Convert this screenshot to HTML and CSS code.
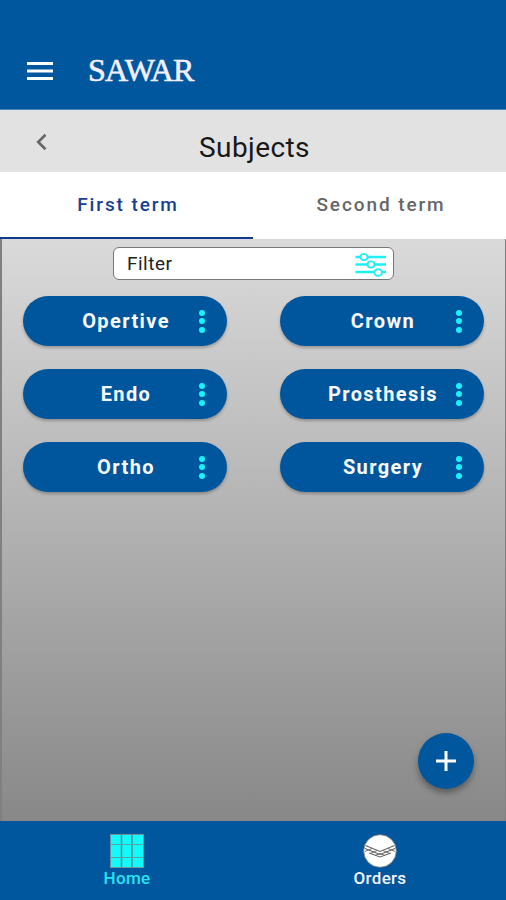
FILE: index.html
```html
<!DOCTYPE html>
<html lang="en">
<head>
    <meta charset="UTF-8">
    <meta name="viewport" content="width=device-width, initial-scale=1.0">
    <title>Subjects</title>
    <link rel="stylesheet" href="styles.css">
</head>
<body>
    <div class="app">
        <header class="topbar">
            <svg class="menu-icon" width="26" height="18" viewBox="0 0 26 18">
                <path d="M0 1.5h26M0 9h26M0 16.5h26" stroke="#fff" stroke-width="2.8"/>
            </svg>
            <span class="logo">SAWAR</span>
        </header>

        <div class="title-bar">
            <svg class="back-icon" width="12" height="18" viewBox="0 0 12 18">
                <path d="M10.500 1.800L3.200 9l7.300 7.200" fill="none" stroke="#666" stroke-width="2.600"/>
            </svg>
            <h1>Subjects</h1>
        </div>

        <div class="tabs">
            <div class="tab active"><span>First term</span></div>
            <div class="tab"><span>Second term</span></div>
        </div>

        <main class="content">
            <div class="filter">
                <span>Filter</span>
                <svg width="32" height="26" viewBox="0 0 32 26">
                    <g fill="none" stroke="#20eef5" stroke-width="2.600">
                        <path d="M0.500 6h5M12.500 6h18.500M0.500 13.500h12M19.500 13.500h11.500M0.500 21h18.500M27 21h4"/>
                        <ellipse cx="9" cy="6" rx="3.600" ry="3.100" stroke-width="1.900"/>
                        <ellipse cx="16" cy="13.500" rx="3.600" ry="3.100" stroke-width="1.900"/>
                        <ellipse cx="23.200" cy="21.500" rx="3.800" ry="3.300" stroke-width="1.900"/>
                    </g>
                </svg>
            </div>

            <div class="subjects">
                <div class="subject"><span>Opertive</span><div class="dots"><i></i><i></i><i></i></div></div>
                <div class="subject"><span>Crown</span><div class="dots"><i></i><i></i><i></i></div></div>
                <div class="subject"><span>Endo</span><div class="dots"><i></i><i></i><i></i></div></div>
                <div class="subject"><span>Prosthesis</span><div class="dots"><i></i><i></i><i></i></div></div>
                <div class="subject"><span>Ortho</span><div class="dots"><i></i><i></i><i></i></div></div>
                <div class="subject"><span>Surgery</span><div class="dots"><i></i><i></i><i></i></div></div>
            </div>

            <div class="add-btn">
                <svg width="22" height="22" viewBox="0 0 22 22">
                    <path d="M11 1v20M1 11h20" stroke="#fff" stroke-width="3"/>
                </svg>
            </div>
        </main>

        <nav class="bottom-nav">
            <div class="nav-item home">
                <svg width="34" height="34" viewBox="0 0 34 34">
                    <rect x="0.500" y="0.500" width="33" height="33" fill="#12fafa" stroke="#6f959c"/>
                    <path d="M11.500 0v34M22 0v34" stroke="#4e959c" stroke-width="1.600"/>
                    <path d="M0 10.500h34M0 23.500h34" stroke="#4ea5aa" stroke-width="1.200"/>
                </svg>
                <span>Home</span>
            </div>
            <div class="nav-item">
                <svg width="34" height="34" viewBox="0 0 34 34">
                    <circle cx="17" cy="17" r="16.300" fill="#fff" stroke="#777" stroke-width="0.800"/>
                    <g fill="none" stroke="#666" stroke-width="1.100">
                        <path d="M2.500 11.500l14.500 6 14.500-6M2 14.500l15 6 15-6M6 19l11 4 11-4"/>
                        <path d="M2 17.500l7-3M7 19.500l7-3M12 21.500l5-2M32 17.500l-7-3M27 19.500l-7-3M22 21.500l-5-2" stroke-width="0.900"/>
                    </g>
                </svg>
                <span>Orders</span>
            </div>
        </nav>
    </div>
</body>
</html>
```
FILE: styles.css
```css
* {
    box-sizing: border-box;
}

body {
    margin: 0;
    font-family: Roboto, "Liberation Sans", sans-serif;
}

.app {
    display: flex;
    flex-direction: column;
    width: 100%;
    height: 900px;
    overflow: hidden;
}

/* header */
.topbar {
    display: flex;
    align-items: center;
    gap: 35px;
    height: 110px;
    padding: 32px 27px 0;
    background: #00579d;
    border-bottom: 1px solid #4a86b8;
}

.logo {
    padding-bottom: 2px;
    font-family: "Liberation Serif", serif;
    font-size: 32px;
    line-height: 36px;
    letter-spacing: -0.8px;
    color: #f4efff;
    -webkit-text-stroke: 0.6px #f4efff;
}

.title-bar {
    display: grid;
    grid-template-columns: 1fr auto 1fr;
    height: 62px;
    padding: 0 0 0 35px;
    background: #e2e2e2;
}

.back-icon {
    margin-top: 23px;
}

.title-bar h1 {
    margin: 21px 0 0 -32px;
    font-size: 28px;
    font-weight: 400;
    line-height: 34px;
    letter-spacing: 0.4px;
    color: #181818;
}

/* tabs */
.tabs {
    display: flex;
    height: 67px;
    background: #fff;
}

.tab {
    flex: 1;
    padding: 20px 0 0 3px;
    text-align: center;
    font-size: 19px;
    font-weight: 500;
    line-height: 26px;
    letter-spacing: 1.9px;
    color: #666;
}

.tab.active {
    color: #173f91;
    border-bottom: 2px solid #103b91;
}

/* content */
.content {
    position: relative;
    flex: 1;
    padding: 8px 21px 0;
    border: solid #808080;
    border-width: 0 1px 0 2px;
    background: linear-gradient(#dadada, #888);
}

.filter {
    display: flex;
    align-items: center;
    justify-content: space-between;
    width: 281px;
    height: 33px;
    margin: 0 auto;
    padding: 0 6px 0 13px;
    background: #fff;
    border: 1px solid #777;
    border-radius: 6px;
    font-size: 19px;
    letter-spacing: 0.5px;
    color: #222;
}

.subjects {
    display: grid;
    grid-template-columns: 204px 204px;
    justify-content: space-between;
    row-gap: 23px;
    margin-top: 16px;
}

.subject {
    display: grid;
    grid-template-columns: 1fr auto 1fr;
    align-items: center;
    height: 50px;
    border-radius: 25px;
    background: #00569c;
    box-shadow: 0 2px 3px rgba(0, 0, 0, 0.25);
    color: #f8f8ff;
    font-size: 20px;
    font-weight: 700;
    letter-spacing: 1.4px;
}

.subject span {
    grid-column: 2;
    padding-left: 2px;
}

.dots {
    display: flex;
    flex-direction: column;
    justify-self: end;
    gap: 2.5px;
    margin-right: 22px;
}

.dots i {
    width: 6px;
    height: 6px;
    border-radius: 50%;
    background: #19f4fc;
}

.add-btn {
    position: absolute;
    right: 31px;
    bottom: 32px;
    display: flex;
    align-items: center;
    justify-content: center;
    width: 56px;
    height: 56px;
    border-radius: 50%;
    background: #00579d;
    box-shadow: 0 4px 6px rgba(0, 0, 0, 0.35);
}

/* bottom navigation */
.bottom-nav {
    display: flex;
    height: 79px;
    background: #00579d;
}

.nav-item {
    flex: 1;
    display: flex;
    flex-direction: column;
    align-items: center;
    padding-top: 13px;
    font-size: 17px;
    font-weight: 500;
    line-height: 21px;
    letter-spacing: 0.3px;
    color: #f5f5ff;
}

.nav-item span {
    padding-left: 1px;
}

.nav-item.home {
    color: #27e4f0;
}
```
